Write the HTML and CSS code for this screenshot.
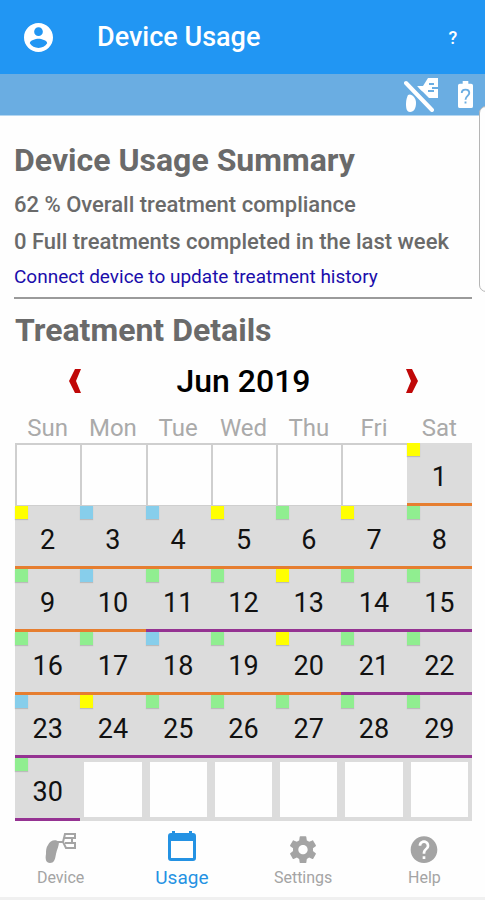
FILE: index.html
```html
<!DOCTYPE html>
<html lang="en">
<head>
<meta charset="utf-8">
<meta name="viewport" content="width=device-width, initial-scale=1">
<title>Device Usage</title>
<link rel="stylesheet" href="styles.css">
</head>
<body>
<header class="app-bar">
  <button class="icon-button" type="button" aria-label="Account">
    <svg class="account-icon" viewBox="2 2 20 20"><path d="M12 2C6.480 2 2 6.480 2 12s4.480 10 10 10 10-4.480 10-10S17.520 2 12 2zm0 3c1.660 0 3 1.340 3 3s-1.340 3-3 3-3-1.340-3-3 1.340-3 3-3zm0 14.200c-2.500 0-4.710-1.280-6-3.220.03-1.990 4-3.080 6-3.080 1.990 0 5.970 1.090 6 3.080-1.290 1.940-3.500 3.220-6 3.220z"/></svg>
  </button>
  <h1 class="app-title">Device Usage</h1>
  <button class="icon-button help-button" type="button">?</button>
</header>
<div class="status-bar">
  <svg class="status-device" viewBox="0 0 34 34" role="img" aria-label="Device disconnected">
    <path d="M4 17C7 15 12 19 12 25C12 30 10 34 6 34C3 34 2 31 2 26C2 22 3 19 4 17Z"/>
    <path d="M13 8H19L24 0H34V20H25L19 14L16 12Z"/>
    <path class="device-detail" d="M25 6H30M24 13H30M28 10H34"/>
    <path class="slash-gap" d="M5 2L33 31"/>
    <path class="slash" d="M2 5L28 32"/>
  </svg>
  <svg class="status-battery" viewBox="0 0 16 29" role="img" aria-label="Battery level unknown">
    <path d="M5 0H11V3H14Q16 3 16 5V27Q16 29 14 29H2Q0 29 0 27V5Q0 3 2 3H5Z"/>
    <path class="battery-mark" d="M4 13C4 8 12 8 12 13C12 16 8 16 8 20M8 22V24"/>
  </svg>
</div>
<aside class="edge-panel" aria-hidden="true"></aside>
<main class="content">
  <section class="summary">
    <h2 class="section-title">Device Usage Summary</h2>
    <div class="stats">
      <p class="stat">62 % Overall treatment compliance</p>
      <p class="stat">0 Full treatments completed in the last week</p>
    </div>
    <a class="connect-link" href="#">Connect device to update treatment history</a>
  </section>
  <section class="details">
    <h2 class="section-title">Treatment Details</h2>
    <div class="month-nav">
      <button class="month-button" type="button" aria-label="Previous month"><svg class="chevron" viewBox="0 0 12 24"><path d="M6 0H12L7 12L12 24H6L0 12Z"/></svg></button>
      <h3 class="month">Jun 2019</h3>
      <button class="month-button" type="button" aria-label="Next month"><svg class="chevron" viewBox="0 0 12 24"><path d="M0 0H6L12 12L6 24H0L5 12Z"/></svg></button>
    </div>
    <table class="calendar">
      <thead>
        <tr><th>Sun</th><th>Mon</th><th>Tue</th><th>Wed</th><th>Thu</th><th>Fri</th><th>Sat</th></tr>
      </thead>
      <tbody>
        <tr><td class="before"></td><td class="before"></td><td class="before"></td><td class="before"></td><td class="before"></td><td class="before"></td><td class="day yellow orange-line">1</td></tr>
        <tr><td class="day yellow orange-line">2</td><td class="day blue orange-line">3</td><td class="day blue orange-line">4</td><td class="day yellow orange-line">5</td><td class="day green orange-line">6</td><td class="day yellow orange-line">7</td><td class="day green orange-line">8</td></tr>
        <tr><td class="day green orange-line">9</td><td class="day blue orange-line">10</td><td class="day green purple-line">11</td><td class="day green purple-line">12</td><td class="day yellow purple-line">13</td><td class="day green purple-line">14</td><td class="day green purple-line">15</td></tr>
        <tr><td class="day green orange-line">16</td><td class="day green orange-line">17</td><td class="day blue orange-line">18</td><td class="day green orange-line">19</td><td class="day yellow orange-line">20</td><td class="day green purple-line">21</td><td class="day green purple-line">22</td></tr>
        <tr><td class="day blue purple-line">23</td><td class="day yellow purple-line">24</td><td class="day green purple-line">25</td><td class="day green purple-line">26</td><td class="day green purple-line">27</td><td class="day green purple-line">28</td><td class="day green purple-line">29</td></tr>
        <tr><td class="day green purple-line">30</td><td class="after"></td><td class="after"></td><td class="after"></td><td class="after"></td><td class="after"></td><td class="after"></td></tr>
      </tbody>
    </table>
  </section>
</main>
<nav class="tabs">
  <a class="tab" href="#">
    <svg class="tab-icon" viewBox="0 0 32 32"><path d="M3 14C5 9 11 8 14 11C14 15 12 18 11 23C10 29 9 32 5 32C1 32 0 28 1 23C1 19 1 17 3 14Z"/><path class="outline" d="M12 11H18M20 3H30V7H27V12H30V17H21L18 11Z M20 7H27M20 12H27"/></svg>
    <span>Device</span>
  </a>
  <a class="tab active" href="#" aria-current="page">
    <svg class="tab-icon" viewBox="0 0 32 32"><path fill-rule="evenodd" d="M6 0H9V2H23V0H26V2H27Q30 2 30 5V27Q30 30 27 30H5Q2 30 2 27V5Q2 2 5 2H6ZM5 10V27H27V10Z"/></svg>
    <span>Usage</span>
  </a>
  <a class="tab" href="#">
    <svg class="tab-icon" viewBox="0 -2 24 24"><path d="M19.430 12.980c.04-.32.07-.64.07-.98s-.03-.66-.07-.98l2.110-1.650c.19-.15.24-.42.12-.64l-2-3.460c-.12-.22-.39-.3-.61-.22l-2.490 1c-.52-.4-1.080-.73-1.690-.98l-.38-2.650C14.460 2.180 14.250 2 14 2h-4c-.25 0-.46.18-.49.42l-.38 2.650c-.61.25-1.170.59-1.690.98l-2.490-1c-.23-.09-.49 0-.61.22l-2 3.460c-.13.22-.07.49.12.64l2.110 1.650c-.04.32-.07.65-.07.98s.03.66.07.98l-2.110 1.650c-.19.15-.24.42-.12.64l2 3.460c.12.22.39.3.61.22l2.490-1c.52.4 1.080.73 1.690.98l.38 2.650c.03.24.24.42.49.42h4c.25 0 .46-.18.49-.42l.38-2.650c.61-.25 1.170-.59 1.690-.98l2.490 1c.23.09.49 0 .61-.22l2-3.460c.12-.22.07-.49-.12-.64l-2.110-1.650zM12 15.500c-1.930 0-3.500-1.570-3.500-3.500s1.570-3.500 3.500-3.500 3.500 1.570 3.500 3.500-1.570 3.500-3.500 3.500z"/></svg>
    <span>Settings</span>
  </a>
  <a class="tab" href="#">
    <svg class="tab-icon" viewBox="0 -2 24 24"><path d="M12 2C6.480 2 2 6.480 2 12s4.480 10 10 10 10-4.480 10-10S17.520 2 12 2zm1 17h-2v-2h2v2zm2.070-7.750l-.9.92C13.450 12.900 13 13.500 13 15h-2v-.5c0-1.100.45-2.100 1.170-2.830l1.240-1.260c.37-.36.59-.86.59-1.410 0-1.100-.9-2-2-2s-2 .9-2 2H8c0-2.210 1.790-4 4-4s4 1.790 4 4c0 .88-.36 1.680-.93 2.250z"/></svg>
    <span>Help</span>
  </a>
</nav>
</body>
</html>
```
FILE: styles.css
```css
* { box-sizing: border-box; }

body {
  margin: 0;
  min-height: 100vh;
  display: flex;
  flex-direction: column;
  position: relative;
  overflow-x: hidden;
  background: #fefefe;
  border-bottom: 3px solid #f0f0f0;
  font-family: Roboto, sans-serif;
}

h1, h2, h3, p { margin: 0; }

button {
  border: 0;
  padding: 0;
  background: none;
  color: inherit;
  font-family: inherit;
  cursor: pointer;
}

svg { display: block; fill: currentColor; }

.app-bar {
  display: flex;
  align-items: center;
  height: 74px;
  padding: 0 24px;
  background: #2196f3;
  color: #fff;
}

.icon-button { height: 48px; }
.account-icon { width: 29px; height: 29px; }

.app-title {
  flex: 1;
  padding-left: 44px;
  font-size: 27px;
  line-height: 32px;
  font-weight: 500;
}

.help-button {
  width: 16px;
  font-size: 18px;
  font-weight: 500;
}

.status-bar {
  display: flex;
  justify-content: flex-end;
  align-items: center;
  gap: 20px;
  height: 42px;
  padding: 0 12px 0 0;
  background: #6aade2;
  border-bottom: 1px solid #b4d6f0;
  color: #fff;
}

.status-device { width: 34px; height: 34px; }
.status-battery { width: 15px; height: 29px; }
.device-detail { stroke: #6aade2; stroke-width: 2; }
.slash-gap { stroke: #6aade2; stroke-width: 3; }
.slash { stroke: #fff; stroke-width: 4; stroke-linecap: round; }
.battery-mark { fill: none; stroke: #6aade2; stroke-width: 2; }

.edge-panel {
  position: absolute;
  top: 106px;
  right: -8px;
  width: 14px;
  height: 186px;
  border: 1px solid #b5b5b5;
  border-radius: 8px;
  background: #fefefe;
}

.content { padding: 25px 13px 0 14px; }

.section-title {
  font-size: 32px;
  line-height: 38px;
  font-weight: 700;
  color: #6a6a6a;
}

.summary {
  padding-bottom: 6px;
  border-bottom: 2px solid #9a9a9a;
}

.stats { padding: 4px 0 2px; }

.stat {
  padding-top: 6px;
  font-size: 22px;
  line-height: 31px;
  font-weight: 500;
  color: #6a6a6a;
}

.connect-link {
  display: block;
  padding-top: 4px;
  font-size: 19px;
  line-height: 28px;
  color: #1a0dab;
  text-decoration: none;
}

.details { padding: 12px 0 0 1px; }

.month-nav {
  display: flex;
  justify-content: space-between;
  align-items: center;
  height: 64px;
  padding: 0 48px;
}

.month {
  font-size: 32px;
  line-height: 36px;
  font-weight: 500;
  color: #000;
}

.month-button { padding: 0 6px; color: #c00808; }
.chevron { width: 12px; height: 24px; }

.calendar {
  width: 100%;
  table-layout: fixed;
  border-spacing: 0;
}

.calendar th {
  height: 30px;
  padding: 0;
  font-size: 24px;
  line-height: 30px;
  font-weight: 400;
  color: #aaa;
}

.calendar td {
  position: relative;
  height: 63px;
  padding: 0;
  text-align: center;
  font-size: 27px;
  line-height: 30px;
  color: #111;
}

.before {
  border: solid #cfcfcf;
  border-width: 2px 0 1px 2px;
}

.after {
  border: 4px solid #dcdcdc;
}

.calendar .day {
  padding-top: 8px;
  background: #dcdcdc;
}

.day::before {
  content: "";
  position: absolute;
  top: 0;
  left: 0;
  width: 13px;
  height: 13px;
  box-shadow: 0 1px 1px #bbb;
}

.yellow::before { background: #ff0; }
.blue::before { background: #87ceeb; }
.green::before { background: #90ee90; }

.orange-line { border-bottom: 3px solid #e67e30; }
.purple-line { border-bottom: 3px solid #953392; }

.tabs {
  display: flex;
  padding-top: 10px;
}

.tab {
  flex: 1;
  display: flex;
  flex-direction: column;
  align-items: center;
  gap: 4px;
  font-size: 16px;
  line-height: 22px;
  color: #a4a4a4;
  text-decoration: none;
}

.tab-icon { width: 32px; height: 32px; }
.outline { fill: none; stroke: currentColor; stroke-width: 2; }

.active {
  font-size: 19px;
  color: #2492e3;
}
```
